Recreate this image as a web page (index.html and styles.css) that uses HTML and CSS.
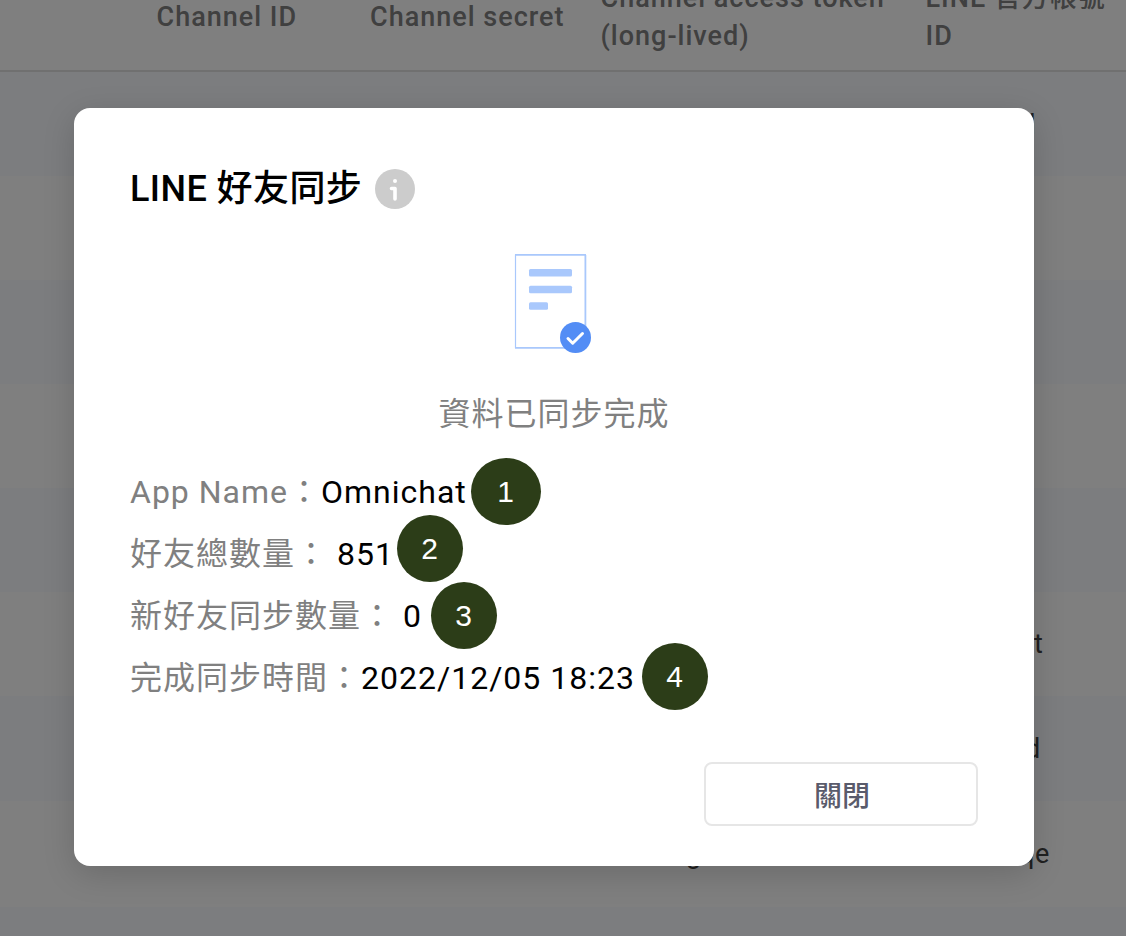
FILE: index.html
```html
<!DOCTYPE html>
<html lang="zh-Hant">
<head>
<meta charset="utf-8">
<title>LINE 好友同步</title>
<link rel="stylesheet" href="styles.css">
</head>
<body>
<main class="page">
  <div class="table">
    <div class="row head">
      <div></div>
      <div>Channel ID</div>
      <div>Channel secret</div>
      <div>Channel access token<br>(long-lived)</div>
      <div>LINE 官方帳號<br>ID</div>
    </div>
    <div class="row"><span class="account first">l</span></div>
    <div class="row"></div>
    <div class="row"></div>
    <div class="row"></div>
    <div class="row"></div>
    <div class="row"><span class="account chat">t</span></div>
    <div class="row tall"><span class="account cloud">d</span></div>
    <div class="row taller"><span class="token">g</span><span class="account unique">qe</span></div>
    <div class="row"></div>
  </div>
  <div class="overlay">
    <section class="dialog" role="dialog">
      <h1 class="title"><span>LINE 好友同步</span>
        <svg class="info" viewBox="0 0 40 40"><circle cx="20" cy="20" r="20" fill="#ccc"/><circle cx="20" cy="12" r="2" fill="#fff"/><path d="M16.5 19.5H20V30" fill="none" stroke="#fff" stroke-width="3.6" stroke-linecap="round" stroke-linejoin="round"/></svg>
      </h1>
      <svg class="document" viewBox="0 0 78 102">
        <path d="M1.5 .5V94" stroke="#a9c8fc" stroke-width="1.2"/>
        <path d="M1 .8H72M1 93.8H72M71.4 1V94" stroke="#a9c8fc" stroke-width="1.8"/>
        <g fill="#a9c8fc"><rect x="15" y="15" width="43" height="7.5" rx="1.5"/><rect x="15" y="31.7" width="43" height="7.5" rx="1.5"/><rect x="15" y="48.2" width="19" height="7.5" rx="1.5"/></g>
        <circle cx="61.5" cy="83.5" r="15.5" fill="#538df5"/>
        <path d="M54 84.5L58.7 89.2L68.5 79.5" fill="none" stroke="#fff" stroke-width="3" stroke-linecap="round" stroke-linejoin="round"/>
      </svg>
      <p class="status">資料已同步完成</p>
      <dl class="details">
        <div class="detail"><dt>App Name：</dt><dd>Omnichat</dd><span class="badge b1">1</span></div>
        <div class="detail"><dt>好友總數量：</dt><dd class="spaced">851</dd><span class="badge b2">2</span></div>
        <div class="detail"><dt>新好友同步數量：</dt><dd class="spaced">0</dd><span class="badge b3">3</span></div>
        <div class="detail"><dt>完成同步時間：</dt><dd>2022/12/05 18:23</dd><span class="badge b4">4</span></div>
      </dl>
      <button class="close">關閉</button>
    </section>
  </div>
</main>
</body>
</html>
```
FILE: styles.css
```css
* { box-sizing: border-box; }
body { margin: 0; font-family: Roboto, "Noto Sans CJK TC", sans-serif; }
.page { position: relative; width: 1126px; height: 936px; overflow: hidden; background: #fff; }
.row { position: relative; height: 104px; }
.row:nth-child(even) { background: #f8fbff; }
.row.tall { height: 105px; }
.row.taller { height: 106px; }
.head { display: grid; grid-template-columns: 156.5px 213.5px 230.5px 325px 1fr; align-items: center; height: 72px; border-bottom: 2px solid #e0e0e0; color: #808080; font-size: 27px; font-weight: 500; line-height: 38px; letter-spacing: 1px; white-space: nowrap; }
.head > div { margin-top: -36px; }
.account, .token { position: absolute; top: 36px; font-size: 27px; line-height: 32px; letter-spacing: .7px; color: #404040; }
.first { left: 1029px; top: 37px; }
.chat { left: 1034px; }
.cloud { left: 1025px; top: 37px; }
.unique { left: 1019px; top: 37px; }
.token { left: 686px; top: 37px; }
.overlay { position: absolute; inset: 0; padding: 108px 92px 70px 74px; background: rgba(0,0,0,.5); }
.dialog { display: flex; flex-direction: column; width: 960px; height: 758px; padding: 56px 56px 40px; border-radius: 16px; background: #fff; box-shadow: 0 8px 32px rgba(0,0,0,.16); }
.title { display: flex; align-items: center; gap: 13px; margin: 0; height: 48px; font-size: 36px; font-weight: 500; line-height: 48px; letter-spacing: .42px; white-space: nowrap; }
.title > span { padding-top: 2px; }
.info { width: 40px; height: 40px; margin-top: 2px; }
.document { align-self: center; width: 78px; height: 102px; margin: 42px 2px 0 0; }
.status { align-self: center; margin: 34px 0 0; color: #808080; font-size: 32px; line-height: 48px; letter-spacing: 1px; }
.details { margin: 23px 0 0; font-size: 32px; letter-spacing: 1px; line-height: 62px; white-space: nowrap; }
.detail { position: relative; display: flex; height: 62px; }
dt { color: #808080; }
dd { margin: 0; color: #000; }
.spaced { padding-left: 9px; }
.badge { position: absolute; width: 66px; height: 67px; border-radius: 50%; background: #2c3d18; color: #fff; font: 30px/67px "Liberation Sans", sans-serif; text-align: center; }
.b1 { left: 341px; top: -3px; width: 70px; }
.b2 { left: 267px; top: -8px; }
.b3 { left: 301px; top: -3px; }
.b4 { left: 512px; top: -4px; }
.close { align-self: flex-end; width: 274px; height: 64px; margin-top: auto; padding: 0 0 0 2px; border: 2px solid #e6e6e6; border-radius: 8px; background: #fff; color: #595b6b; font: 500 28px/60px "Noto Sans CJK TC", sans-serif; }
```
